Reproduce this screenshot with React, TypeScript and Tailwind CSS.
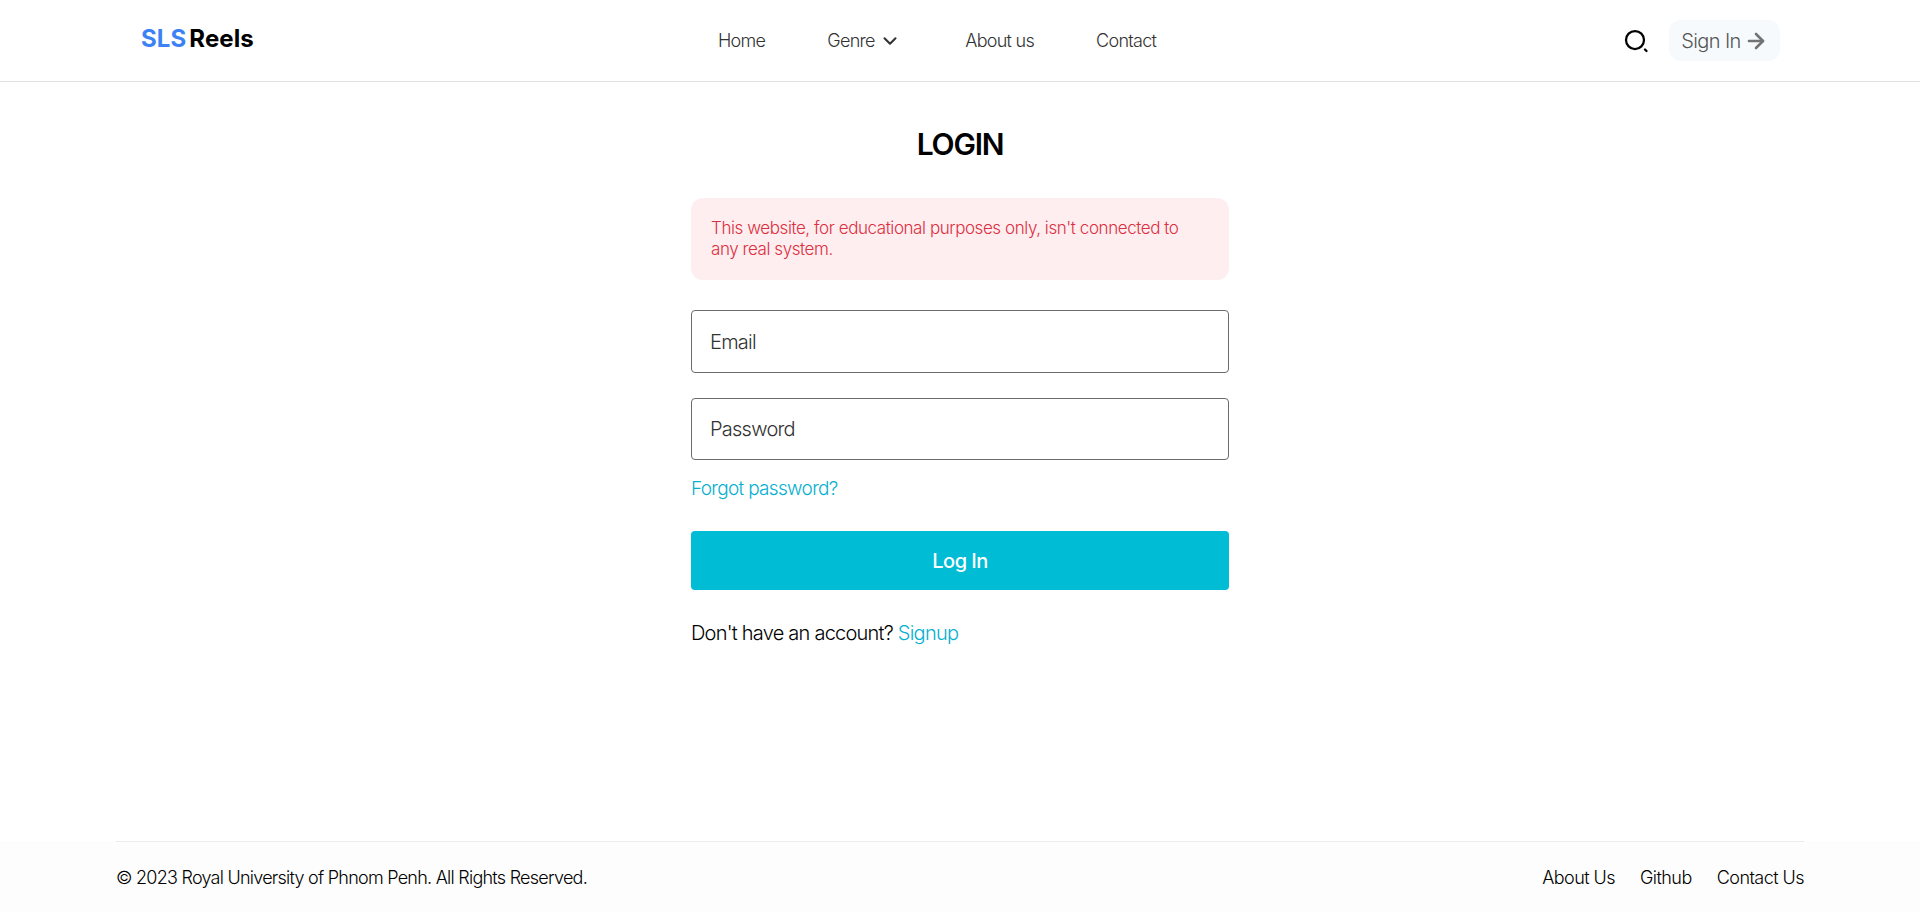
import React from 'react';
import { ChevronDown, ArrowRight } from 'lucide-react';

const App: React.FC = () => {
  return (
    <div className="h-[912px] bg-white flex flex-col font-['Inter',sans-serif] text-black overflow-hidden">
      {/* Top bar */}
      <header className="h-[82px] shrink-0 border-b border-[#e0e0e0] pl-[141px] pr-[140px] flex items-center">
        <div className="w-[577px] -mt-[4px] flex gap-[3px] text-[24px] font-bold leading-[30px] tracking-[0.1px]">
          <span className="text-[#3b82f6]">SLS</span>
          <span>Reels</span>
        </div>
        <nav className="flex-1 flex items-center gap-[62px] text-[18px] font-light text-[#333] leading-6 tracking-[-0.72px]">
          <a>Home</a>
          <a className="flex items-center gap-[4px] w-[76px]">
            Genre <ChevronDown className="shrink-0" size={22} strokeWidth={2.25} />
          </a>
          <a>About us</a>
          <a>Contact</a>
        </nav>
        <div className="flex items-center gap-[21px]">
          <svg width="24" height="24" viewBox="0 0 24 24" fill="none" stroke="#000" strokeWidth="2.25" strokeLinecap="round">
            <circle cx="11" cy="11" r="9" />
            <path d="M21 20.5 L22.5 22" />
          </svg>
          <a className="h-[41px] w-[111px] rounded-[12px] bg-[#f6fafd] flex items-center justify-center gap-[3px] text-[20px] font-light text-[#555] tracking-[-0.6px]">
            Sign In <ArrowRight size={24} strokeWidth={2.6} color="#737373" />
          </a>
        </div>
      </header>

      {/* Login form */}
      <main className="flex-1 flex flex-col items-center">
        <div className="w-[538px] pt-[42px]">
          <h1 className="text-center text-[30px] font-semibold leading-[40px] tracking-[-1.2px]">LOGIN</h1>
          <div className="mt-[34px] h-[82px] rounded-[12px] bg-[#feeeef] pl-[20px] pr-[40px] py-[20px] text-[17px] font-light leading-[21px] tracking-[-0.43px] text-[#dc2f3f]">
            This website, for educational purposes only, isn't connected to any real system.
          </div>
          <input
            placeholder="Email"
            className="mt-[30px] block w-full h-[63px] rounded-[4px] border border-[#6b6b6b] px-[18px] text-[20px] font-light tracking-[-0.75px] placeholder:text-[#333] outline-none"
          />
          <input
            placeholder="Password"
            className="mt-[25px] block w-full h-[62px] rounded-[4px] border border-[#6b6b6b] px-[18px] text-[20px] font-light tracking-[-0.75px] placeholder:text-[#333] outline-none"
          />
          <a className="mt-[16px] block text-[19px] font-light leading-[26px] tracking-[-0.68px] text-[#06b0cf]">Forgot password?</a>
          <button className="mt-[29px] block w-full h-[59px] rounded-[4px] bg-[#00bcd4] text-[20px] font-medium tracking-[-0.55px] text-white">
            Log In
          </button>
          <p className="mt-[30px] text-[20px] font-light leading-[26px] tracking-[-0.77px]">
            Don't have an account? <a className="text-[#06b0cf]">Signup</a>
          </p>
        </div>
      </main>

      {/* Footer */}
      <footer className="h-[71px] shrink-0 bg-[#fdfdfd] px-[116px]">
        <div className="h-full border-t border-[#ececec] flex items-center justify-between text-[18px] font-light tracking-[-0.75px]">
          <span>© 2023 Royal University of Phnom Penh. All Rights Reserved.</span>
          <div className="flex gap-[25px] tracking-[-0.55px]">
            <a>About Us</a>
            <a>Github</a>
            <a>Contact Us</a>
          </div>
        </div>
      </footer>
    </div>
  );
};

export default App;
